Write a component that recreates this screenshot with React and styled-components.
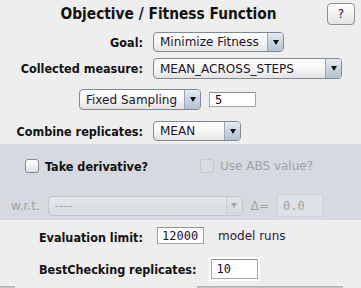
import React from 'react';
import styled, { createGlobalStyle } from 'styled-components';

const GlobalStyle = createGlobalStyle`
  html, body {
    margin: 0;
    padding: 0;
    background: #eeeeee;
  }
`;

const Panel = styled.div`
  width: 361px;
  height: 288px;
  overflow: hidden;
  background: #eeeeee;
  font-family: 'DejaVu Sans', 'Liberation Sans', sans-serif;
  font-size: 12px;
  color: #1c1424;
  display: flex;
  flex-direction: column;
`;

const Header = styled.div`
  display: flex;
  align-items: flex-start;
  height: 28px;
  padding: 3px 6px 0 0;
  box-sizing: border-box;
`;

const Title = styled.div`
  flex: 1;
  padding-left: 10px;
  padding-top: 2px;
  text-align: center;
  font-family: 'DejaVu Sans Condensed', 'DejaVu Sans', sans-serif;
  font-stretch: condensed;
  font-weight: bold;
  font-size: 15.3px;
  color: #111;
`;

const HelpButton = styled.div`
  width: 28px;
  height: 22px;
  box-sizing: border-box;
  border: 1px solid #8d8f93;
  border-radius: 4px;
  background: linear-gradient(#ffffff, #f4f4f4 45%, #e2e2e2);
  display: flex;
  align-items: center;
  justify-content: center;
  font-size: 12px;
  color: #2a2040;
`;

const Row = styled.div`
  display: flex;
  align-items: center;
  gap: ${p => p.$gap ?? 10}px;
  height: ${p => p.$h}px;
  margin-top: ${p => p.$mt}px;
  padding-left: ${p => p.$pl ?? 0}px;
`;

const Label = styled.div`
  width: ${p => (p.$w ? `${p.$w}px` : 'auto')};
  text-align: right;
  font-family: 'DejaVu Sans Condensed', 'DejaVu Sans', sans-serif;
  font-stretch: condensed;
  font-weight: bold;
  font-size: 12.5px;
  color: #111;
  white-space: nowrap;
  margin-top: ${p => p.$dy ?? 0}px;
`;

const Combo = styled.div`
  width: ${p => p.$w}px;
  height: ${p => p.$h ?? 20}px;
  box-sizing: border-box;
  display: flex;
  border: 1px solid ${p => (p.$disabled ? '#c3c6cb' : '#7f8994')};
  border-radius: 4px;
  background: ${p =>
    p.$disabled
      ? 'linear-gradient(#e2e5e9, #d9dce1)'
      : 'linear-gradient(#ffffff, #f6f6f6 50%, #e3e3e3)'};
  overflow: hidden;
`;

const ComboValue = styled.div`
  flex: 1;
  display: flex;
  align-items: center;
  padding-left: 6px;
  font-size: 12px;
  color: ${p => (p.$disabled ? '#a2a4a8' : '#1c1424')};
  white-space: nowrap;
`;

const ComboArrow = styled.div`
  width: 15px;
  border-left: 1px solid ${p => (p.$disabled ? '#c9ccd1' : '#9aa6b3')};
  background: ${p =>
    p.$disabled
      ? 'linear-gradient(#e0e3e7, #d6d9de)'
      : 'linear-gradient(#e6ecf2, #c8d3de 55%, #b3c2d1)'};
  display: flex;
  align-items: center;
  justify-content: center;

  &::after {
    content: '';
    border-left: 3.5px solid transparent;
    border-right: 3.5px solid transparent;
    border-top: 5px solid ${p => (p.$disabled ? '#a3a6ab' : '#111')};
  }
`;

const Field = styled.div`
  width: ${p => p.$w}px;
  height: ${p => p.$h}px;
  box-sizing: border-box;
  display: flex;
  align-items: center;
  padding-left: ${p => p.$pl ?? 5}px;
  font-family: 'DejaVu Sans Mono', 'Liberation Mono', monospace;
  font-size: 12px;
  background: ${p => (p.$disabled ? '#dee1e5' : '#ffffff')};
  border: 1px solid ${p => (p.$disabled ? '#cfd2d6' : '#a6a6a6')};
  border-top-color: ${p => (p.$disabled ? '#cfd2d6' : '#8e8e8e')};
  color: ${p => (p.$disabled ? '#a2a4a8' : '#1a1030')};
  outline: ${p => (p.$focus ? '2px solid #ffffff' : 'none')};
`;

const Band = styled.div`
  margin-top: 3px;
  height: 76px;
  background: #d6d9df;
  display: flex;
  flex-direction: column;
`;

const CheckGroup = styled.div`
  display: flex;
  align-items: center;
  gap: 6px;
  width: ${p => (p.$w ? `${p.$w}px` : 'auto')};
`;

const Box = styled.div`
  width: 14px;
  height: 14px;
  box-sizing: border-box;
  border-radius: 3px;
  border: 1px solid ${p => (p.$disabled ? '#c4c7cc' : '#8a8c90')};
  background: ${p =>
    p.$disabled ? '#d9dce1' : 'linear-gradient(#ffffff, #f2f2f2 50%, #dedede)'};
`;

const Muted = styled.span`
  color: #a0a2a6;
  font-size: 12px;
  white-space: nowrap;
`;

const Plain = styled.span`
  font-size: 12px;
  color: #2b1838;
  white-space: nowrap;
`;

const Footer = styled.div`
  margin-top: 6px;
  display: flex;
  height: 2px;
`;

const Edge = styled.div`
  width: ${p => p.$w}px;
  margin-left: ${p => p.$ml ?? 0}px;
  background: #c2c2c2;
  border-top: 1px solid #b2b2b2;
`;

export default function App() {
  return (
    <>
      <GlobalStyle />
      <Panel>
        <Header>
          <Title>Objective / Fitness Function</Title>
          <HelpButton>?</HelpButton>
        </Header>

        <Row $h={20} $mt={4}>
          <Label $w={143}>Goal:</Label>
          <Combo $w={131}>
            <ComboValue>Minimize Fitness</ComboValue>
            <ComboArrow />
          </Combo>
        </Row>

        <Row $h={21} $mt={6}>
          <Label $w={143}>Collected measure:</Label>
          <Combo $w={189} $h={21}>
            <ComboValue>MEAN_ACROSS_STEPS</ComboValue>
            <ComboArrow />
          </Combo>
        </Row>

        <Row $h={21} $mt={10} $pl={79} $gap={8}>
          <Combo $w={122} $h={21}>
            <ComboValue>Fixed Sampling</ComboValue>
            <ComboArrow />
          </Combo>
          <Field $w={47} $h={15}>5</Field>
        </Row>

        <Row $h={20} $mt={11}>
          <Label $w={143}>Combine replicates:</Label>
          <Combo $w={88}>
            <ComboValue>MEAN</ComboValue>
            <ComboArrow />
          </Combo>
        </Row>

        <Band>
          <Row $h={14} $mt={15} $pl={25} $gap={0}>
            <CheckGroup $w={175}>
              <Box />
              <Label>Take derivative?</Label>
            </CheckGroup>
            <CheckGroup>
              <Box $disabled />
              <Muted>Use ABS value?</Muted>
            </CheckGroup>
          </Row>

          <Row $h={23} $mt={21} $pl={11} $gap={8}>
            <Muted>w.r.t.</Muted>
            <Combo $w={195} $disabled>
              <ComboValue $disabled>----</ComboValue>
              <ComboArrow $disabled />
            </Combo>
            <Muted>Δ=</Muted>
            <Field $w={46} $h={23} $disabled>0.0</Field>
          </Row>
        </Band>

        <Row $h={17} $mt={7} $gap={14}>
          <Label $w={143} $dy={4}>Evaluation limit:</Label>
          <Field $w={47} $h={17} $pl={4}>12000</Field>
          <Plain>model runs</Plain>
        </Row>

        <Row $h={22} $mt={14} $pl={39} $gap={14}>
          <Label>BestChecking replicates:</Label>
          <Field $w={47} $h={20} $focus>10</Field>
        </Row>

        <Footer>
          <Edge $w={15} />
          <Edge $w={146} $ml={182} />
        </Footer>
      </Panel>
    </>
  );
}
